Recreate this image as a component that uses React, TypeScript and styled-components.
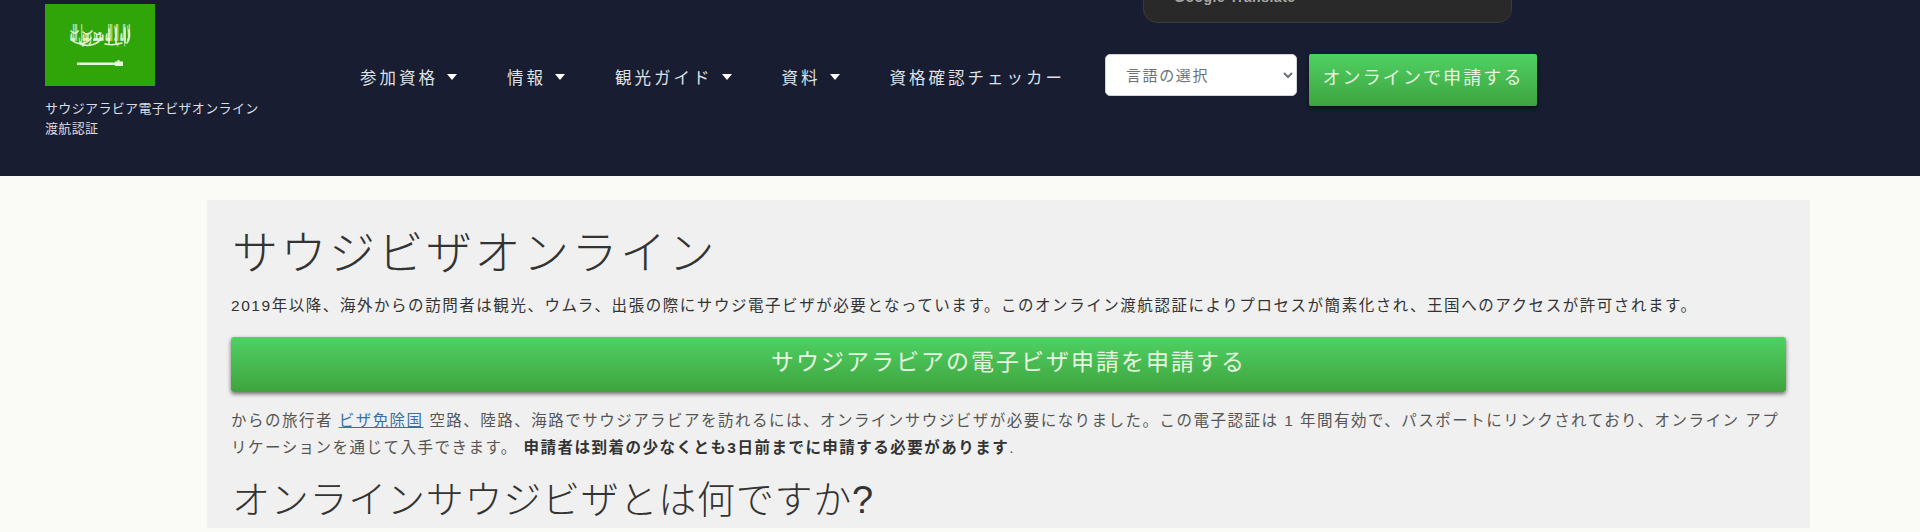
import React from 'react';
import styled, { createGlobalStyle } from 'styled-components';

const CJK = `'Liberation Sans', 'Noto Sans CJK JP', sans-serif`;

const GlobalStyle = createGlobalStyle`
  html, body {
    margin: 0;
    height: 532px;
    overflow: hidden;
    background: #fafaf6;
    font-family: ${CJK};
  }
  * { box-sizing: border-box; }
`;

const Header = styled.header`
  position: relative;
  display: flex;
  align-items: flex-start;
  height: 176px;
  padding: 4px 0 0 45px;
  background: #181d32;
`;

const TranslatePopup = styled.div`
  position: absolute;
  top: -34px;
  left: 1143px;
  width: 369px;
  height: 57px;
  padding: 22px 30px 0;
  border: 1px solid #3a3a3c;
  border-radius: 14px;
  background: #292929;
  color: #a8a8a8;
  font-size: 14px;
  font-weight: 700;
  letter-spacing: 0.5px;
`;

const Brand = styled.div`
  width: 315px;
  flex: none;
`;

const Flag = styled.svg`
  display: block;
  width: 110px;
  height: 82px;
`;

const Tagline = styled.div`
  width: 225px;
  margin-top: 13px;
  color: #dcdde4;
  font-size: 13px;
  line-height: 20px;
  letter-spacing: 0.35px;
`;

const Nav = styled.nav`
  display: flex;
  align-items: center;
  gap: 50px;
  height: 51px;
  margin-top: 47px;
`;

const NavItem = styled.a<{ $caret?: boolean }>`
  display: flex;
  align-items: center;
  color: #dfe1e6;
  font-size: 16.5px;
  letter-spacing: 3px;
  white-space: nowrap;

  ${({ $caret }) =>
    $caret &&
    `
    &::after {
      content: '';
      margin-left: 9px;
      border-top: 6px solid #fff;
      border-left: 5px solid transparent;
      border-right: 5px solid transparent;
    }
  `}
`;

const Actions = styled.div`
  display: flex;
  align-items: flex-start;
  gap: 12px;
  margin: 50px 0 0 40px;
`;

const LangSelect = styled.select`
  width: 192px;
  height: 42px;
  padding: 0 16px;
  border: 1px solid #ced4da;
  border-radius: 5px;
  background: #fff;
  color: #6c7278;
  font-family: ${CJK};
  font-size: 15px;
  letter-spacing: 1.6px;
`;

const greenButton = `
  background: linear-gradient(to bottom, #4fd163 0%, #3fa33e 100%);
  color: #e6f6e2;
  text-align: center;
  box-shadow: 0 2px 4px rgba(0, 0, 0, 0.55);
`;

const ApplyButton = styled.a`
  ${greenButton}
  display: block;
  width: 228px;
  height: 52px;
  border-radius: 2px;
  font-size: 18px;
  line-height: 48px;
  letter-spacing: 2.1px;
  white-space: nowrap;
`;

const Card = styled.main`
  width: 1603px;
  margin: 24px 0 0 207px;
  padding: 19px 24px 0;
  background: #f0f0f0;
  color: #333;
`;

const Title = styled.h1`
  margin: 0;
  padding-left: 1px;
  font-size: 46px;
  font-weight: 300;
  line-height: 68px;
  letter-spacing: 2.5px;
`;

const Subtitle = styled.h2`
  margin: 11px 0 0;
  padding-left: 1px;
  font-size: 38px;
  font-weight: 300;
  line-height: 56px;
  letter-spacing: 0.75px;
`;

const Lead = styled.p`
  margin: 5px 0 0;
  font-size: 15.5px;
  line-height: 27px;
  letter-spacing: 1.55px;
  white-space: nowrap;
`;

const WideButton = styled.a`
  ${greenButton}
  display: block;
  height: 55px;
  margin-top: 18px;
  border-radius: 3px;
  font-size: 23px;
  line-height: 51px;
  letter-spacing: 2px;
`;

const Body = styled.p`
  margin: 15px 0 0;
  color: #555;
  font-size: 15.5px;
  line-height: 27px;
  letter-spacing: 1.48px;
`;

const Link = styled.a`
  color: #3a6ea8;
  text-decoration: underline;
`;

const Strong = styled.strong`
  color: #333;
`;

const SaudiFlag = () => (
  <Flag viewBox="0 0 110 82" role="img" aria-label="サウジアラビア国旗">
    <rect width="110" height="82" fill="#2fa50a" />
    <text
      x="55"
      y="37"
      textAnchor="middle"
      fontFamily="'DejaVu Sans', sans-serif"
      fontSize="22"
      fontWeight="700"
      fill="#e6f5d8"
      textLength="60"
      lengthAdjust="spacingAndGlyphs"
    >
      لا إله إلا الله محمد رسول الله
    </text>
    <path
      d="M26 27c3 3 5 3 7 0M27 36c5 5 14 5 19-2M38 28c3 3 6 3 9-1M35 40c8 3 17 1 22-6M50 29c2 2 4 2 6 0M60 40c5 1 11 1 17-1M64 25v14M71 24v15M80 24v15M84 26c1 5 1 9-2 13"
      fill="none"
      stroke="#e6f5d8"
      strokeWidth="1.6"
      strokeLinecap="round"
    />
    <path d="M32 58.500h38V61H32z" fill="#e8f7dc" />
    <path d="M70 57.500h2.500V56h2v1.500H78V62h-8z" fill="#e8f7dc" />
  </Flag>
);

export default function App() {
  return (
    <>
      <GlobalStyle />
      <Header>
        <TranslatePopup>Google Translate</TranslatePopup>
        <Brand>
          <SaudiFlag />
          <Tagline>サウジアラビア電子ビザオンライン渡航認証</Tagline>
        </Brand>
        <Nav>
          <NavItem $caret>参加資格</NavItem>
          <NavItem $caret>情報</NavItem>
          <NavItem $caret>観光ガイド</NavItem>
          <NavItem $caret>資料</NavItem>
          <NavItem>資格確認チェッカー</NavItem>
        </Nav>
        <Actions>
          <LangSelect defaultValue="">
            <option value="">言語の選択</option>
          </LangSelect>
          <ApplyButton>オンラインで申請する</ApplyButton>
        </Actions>
      </Header>
      <Card>
        <Title>サウジビザオンライン</Title>
        <Lead>
          2019年以降、海外からの訪問者は観光、ウムラ、出張の際にサウジ電子ビザが必要となっています。このオンライン渡航認証によりプロセスが簡素化され、王国へのアクセスが許可されます。
        </Lead>
        <WideButton>サウジアラビアの電子ビザ申請を申請する</WideButton>
        <Body>
          からの旅行者 <Link>ビザ免除国</Link>{' '}
          空路、陸路、海路でサウジアラビアを訪れるには、オンラインサウジビザが必要になりました。この電子認証は 1 年間有効で、パスポートにリンクされており、オンライン アプリケーションを通じて入手できます。{' '}
          <Strong>申請者は到着の少なくとも3日前までに申請する必要があります</Strong>.
        </Body>
        <Subtitle>オンラインサウジビザとは何ですか?</Subtitle>
      </Card>
    </>
  );
}
